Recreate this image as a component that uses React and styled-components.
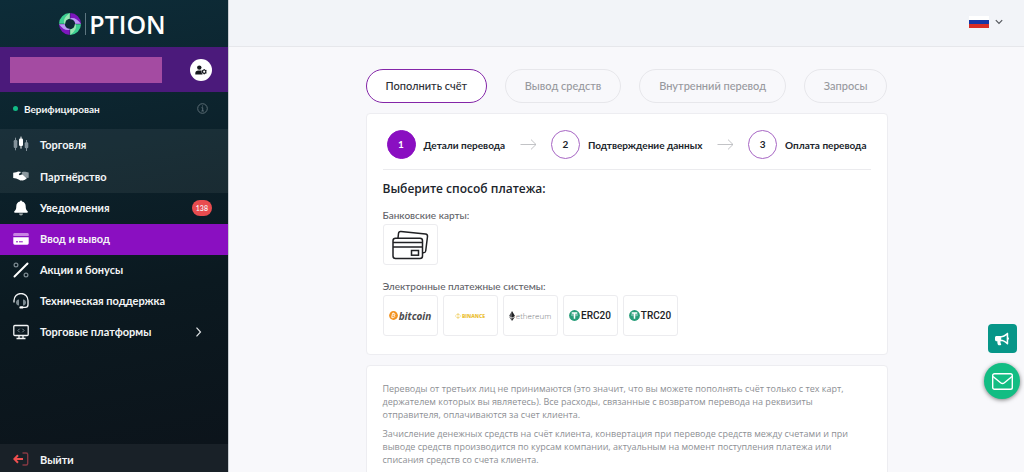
import React, { useState } from 'react';

import styled, { createGlobalStyle } from 'styled-components';
import { FaBullhorn } from 'react-icons/fa';

const GlobalStyle = createGlobalStyle`
  * {
    box-sizing: border-box;
  }
  body {
    margin: 0;
    background-color: #f8f8fb;
    color: #20242b;
    font-family: Lato, 'Open Sans', sans-serif;
    font-size: 11px;
  }
  button {
    padding: 0;
    border: 0;
    background: none;
    color: inherit;
    font: inherit;
    cursor: pointer;
  }
  a {
    color: inherit;
    text-decoration: none;
  }
  svg {
    display: block;
    flex-shrink: 0;
  }
`;

const Layout = styled.div`
  display: flex;
  height: 100vh;
`;

const Sidebar = styled.aside`
  width: 229px;
  flex-shrink: 0;
  display: flex;
  flex-direction: column;
  border-right: 1px solid #c9ced3;
  background: linear-gradient(170deg, #0d2c38 0%, #0b1920 62%, #0c131a 100%);
  color: #f3f5f6;
`;

const Logo = styled.a`
  height: 47px;
  padding-right: 3px;
  display: flex;
  align-items: center;
  justify-content: center;
  gap: 4px;
  color: #fff;
`;

const LogoText = styled.span`
  padding-left: 3px;
  border-left: 1px solid #5d7680;
  font-family: 'Open Sans', sans-serif;
  font-size: 25px;
  font-weight: 600;
  line-height: 22px;
`;

const UserBar = styled.div`
  height: 45px;
  padding: 0 16px 0 10px;
  display: flex;
  align-items: center;
  justify-content: space-between;
  background-color: #4b1a7b;
`;

const UserName = styled.div`
  width: 152px;
  height: 26px;
  background-color: #a44ba2;
`;

const ProfileButton = styled.button`
  width: 22px;
  height: 22px;
  display: flex;
  align-items: center;
  justify-content: center;
  border-radius: 50%;
  background-color: #fff;
`;

const Status = styled.div`
  height: 37px;
  padding: 0 20px 4px 13px;
  display: flex;
  align-items: center;
  gap: 6px;
  font-size: 10px;
  font-weight: 700;
`;

const StatusDot = styled.span`
  width: 5px;
  height: 5px;
  border-radius: 50%;
  background-color: #12bb86;
`;

const InfoButton = styled.button`
  margin-left: auto;
`;

const Menu = styled.nav`
  flex: 1;
`;

const MenuGroup = styled.div`
  background-color: rgba(255, 255, 255, 0.06);
`;

const MenuItem = styled.a`
  height: ${(props) => (props.$tall ? '32px' : '31px')};
  padding: 0 16px 2px 13px;
  display: flex;
  align-items: center;
  gap: 11px;
  background-color: ${(props) => (props.$active ? '#8a0fc1' : 'transparent')};
  font-weight: 700;
`;

const Badge = styled.span`
  height: 16px;
  padding: 0 4px;
  margin-left: auto;
  border-radius: 8px;
  background-color: #e84c4f;
  font-size: 7px;
  font-weight: 600;
  line-height: 16px;
`;

const MenuArrow = styled.span`
  margin: 0 10px 0 auto;
`;

const Logout = styled.button`
  height: 28px;
  padding: 2px 13px 0;
  display: flex;
  align-items: center;
  gap: 11px;
  background-color: #192128;
  font-weight: 700;
`;

const Main = styled.main`
  flex: 1;
  min-width: 0;
  overflow-y: auto;
  scrollbar-width: none;
`;

const Header = styled.header`
  height: 47px;
  padding: 0 21px 2px;
  display: flex;
  align-items: center;
  justify-content: flex-end;
  border-bottom: 1px solid #e6e7eb;
  background-color: #f2f4f8;
`;

const LanguageButton = styled.button`
  display: flex;
  align-items: center;
  gap: 6px;
`;

const Content = styled.div`
  max-width: 554px;
  margin: 0 auto;
  padding: 22px 16px 16px;
`;

const Tabs = styled.div`
  display: flex;
  justify-content: space-between;
  margin-bottom: 10px;
`;

const Tab = styled.button`
  height: 34px;
  padding: 0 19px 2px;
  border: 1px solid ${(props) => (props.$active ? '#8426a8' : '#e7e7eb')};
  border-radius: 17px;
  background-color: ${(props) => (props.$active ? '#fff' : 'transparent')};
  color: ${(props) => (props.$active ? '#2b2e35' : '#97999e')};
  font-weight: 500;
`;

const Card = styled.section`
  padding: 16px 16px 18px;
  margin-bottom: 10px;
  border: 1px solid #ededf1;
  border-radius: 4px;
  background-color: #fff;
`;

const Steps = styled.div`
  padding: 0 4px 10px;
  display: flex;
  align-items: center;
  justify-content: space-between;
  border-bottom: 1px solid #ebebee;
`;

const Step = styled.div`
  display: flex;
  align-items: center;
  gap: 8px;
  font-size: 10px;
  font-weight: 700;
`;

const StepNumber = styled.span`
  width: 29px;
  height: 29px;
  border: 1px solid ${(props) => (props.$active ? '#8a0fc1' : '#a766c4')};
  border-radius: 50%;
  background-color: ${(props) => (props.$active ? '#8a0fc1' : '#fff')};
  color: ${(props) => (props.$active ? '#fff' : '#20242b')};
  line-height: 27px;
  text-align: center;
`;

const CardTitle = styled.h2`
  margin: 10px 0 12px;
  font-family: 'Open Sans', sans-serif;
  font-size: 12px;
  font-weight: 600;
  line-height: 18px;
`;

const MethodLabel = styled.div`
  margin-bottom: 3px;
  color: #5f6268;
  font-size: 10px;
  font-weight: 500;
  line-height: 11px;
`;

const MethodList = styled.div`
  display: flex;
  flex-wrap: wrap;
  gap: 5px;
  & + ${MethodLabel} {
    margin-top: 16px;
  }
`;

const Method = styled.button`
  width: 55px;
  height: 41px;
  display: flex;
  align-items: center;
  justify-content: center;
  gap: 1px;
  border: 1px solid #ececef;
  border-radius: 3px;
  background-color: #fff;
`;

const Brand = styled.span`
  color: ${(props) => props.$color};
  font-family: ${(props) => props.$family || "'Open Sans', sans-serif"};
  font-size: ${(props) => props.$size};
  font-style: ${(props) => (props.$italic ? 'italic' : 'normal')};
  font-weight: ${(props) => props.$weight || 400};
`;

const Note = styled.p`
  margin: 0 0 6px;
  color: #8d8f94;
  font-family: 'Open Sans', sans-serif;
  font-size: 9px;
  line-height: 13px;
`;

const Floating = styled.div`
  position: fixed;
  right: 4px;
  bottom: 73px;
  display: flex;
  flex-direction: column;
  align-items: center;
  gap: 10px;
`;

const FloatingButton = styled.button`
  width: ${(props) => props.$size};
  height: ${(props) => props.$size};
  display: flex;
  align-items: center;
  justify-content: center;
  border-radius: ${(props) => props.$radius};
  background-color: ${(props) => props.$color};
  box-shadow: ${(props) => (props.$shadow ? '0 1px 4px rgba(0, 0, 0, 0.5)' : 'none')};
  color: #fff;
`;

const LogoIcon = () => (
  <svg width="22" height="22" viewBox="0 0 22 22">
    {logoSegments.map(({ angle, outer, inner }) => (
      <g key={angle} transform={`rotate(${angle} 11 11)`}>
        <path d="M11.300 0A11 11 0 0 1 22 10.700h-5.800a5.200 5.200 0 0 0-4.900-4.900z" fill={outer} />
        <path d="M11.300 5.200c3.500-1 7 .5 10.700 5.500h-5.800a5.200 5.200 0 0 0-4.900-4.500z" fill={inner} />
      </g>
    ))}
  </svg>
);

const ProfileIcon = () => (
  <svg width="12" height="10" viewBox="0 0 12 10">
    <circle cx="4.300" cy="2.600" r="2.200" fill="#15181d" />
    <path d="M.3 9.500V8.200c0-1.700 1.300-2.600 3-2.600h2.400c.5 0 .8.1 1 .2-.3 1.500 0 2.800 1 3.700z" fill="#15181d" />
    <circle cx="9.200" cy="6.700" r="1.700" fill="none" stroke="#15181d" strokeWidth="1.200" />
    <path d="M9.200 4v1M9.200 8.400v1M6.900 5.400l.8.400M10.700 7.600l.8.400M11.500 5.400l-.8.400M7.700 7.600l-.8.400" stroke="#15181d" strokeWidth="1" />
  </svg>
);

const InfoIcon = () => (
  <svg width="11" height="11" viewBox="0 0 11 11" fill="none" stroke="#62737b" strokeWidth=".9">
    <circle cx="5.500" cy="5.500" r="4.800" />
    <path d="M4.500 4.700h1.200V8M4.400 8h2.500M5.500 2.500v1" />
  </svg>
);

const TradeIcon = () => (
  <svg width="16" height="16" viewBox="0 0 16 16">
    <path d="M2.500 1.700v12.600M13.500 4v11" stroke="#82919a" />
    <rect x=".7" y="4" width="3.600" height="8" rx="1.200" fill="#82919a" />
    <rect x="11.700" y="6.300" width="3.600" height="6" rx="1.200" fill="#82919a" />
    <path d="M8 .6v12" stroke="#fff" />
    <rect x="6" y="2.500" width="4" height="7.500" rx="1.200" fill="#fff" />
  </svg>
);

const HandshakeIcon = () => (
  <svg width="16" height="12" viewBox="0 0 16 12">
    <path d="M8.500 2.600l1.600-.9h2.300l3.300.8v5.300l-2 .3-3.700-3z" fill="#8d999f" />
    <path d="M.2 2.700l3-.4 2-.9 3 .5-2.100 1.800c-.6.700.2 1.800 1.500 1.300l1.700-.8 4.100 3.700c.4.900-.3 1.500-1 1.300-.2.700-1 1-1.600.7-.5.700-1.200.8-1.900.4-1.200.4-2 .2-2.800-.5L3.200 8.400l-3-.3z" fill="#fff" />
  </svg>
);

const BellIcon = () => (
  <svg width="16" height="16" viewBox="0 0 16 16" fill="#fff">
    <path d="M7 1.500a1 1 0 0 1 2 0c2.400.5 3.700 2.300 3.700 4.700 0 2.500.5 3.600 1.900 5 .6.700.2 1.500-.6 1.500H2c-.8 0-1.200-.8-.6-1.500 1.400-1.400 1.900-2.500 1.900-5C3.300 3.800 4.600 2 7 1.500z" />
    <path d="M6 13.600h4a2 2 0 0 1-4 0z" opacity=".6" />
  </svg>
);

const CardIcon = () => (
  <svg width="16" height="14" viewBox="0 0 16 14">
    <path d="M1.500 1h13q1.200 0 1.200 1.200V4H.3V2.200Q.3 1 1.500 1z" fill="#c884e2" />
    <path d="M.3 5.300h15.400v6q0 1.400-1.400 1.400H1.700q-1.400 0-1.400-1.400z" fill="#fff" />
    <path d="M3 9.800h2M6 9.800h3.800" stroke="#8a0fc1" />
  </svg>
);

const PercentIcon = () => (
  <svg width="16" height="16" viewBox="0 0 16 16" fill="none">
    <path d="M14.500 1.500l-13 13" stroke="#fff" strokeWidth="2" strokeLinecap="round" />
    <circle cx="3" cy="3" r="1.900" stroke="#7c8a91" strokeWidth="1.200" />
    <circle cx="13" cy="13" r="1.900" stroke="#7c8a91" strokeWidth="1.200" />
  </svg>
);

const SupportIcon = () => (
  <svg width="16" height="16" viewBox="0 0 16 16" fill="none">
    <path d="M1 9.500V7.500a7 7 0 0 1 14 0v4.200c0 1.800-1 2.600-2.700 2.600H8.500" stroke="#f3f5f6" strokeWidth="1.300" />
    <path d="M6 6.500v6C3.800 12.500 3 11 3 9.500s.8-3 3-3zM10 6.500v6c2.200 0 3-1.500 3-3s-.8-3-3-3z" fill="#7c8a91" />
    <rect x="6.400" y="13.200" width="4" height="2.400" rx="1.200" fill="#fff" />
  </svg>
);

const PlatformIcon = () => (
  <svg width="16" height="16" viewBox="0 0 16 16" fill="none" stroke="#f3f5f6" strokeWidth="1.300">
    <rect x=".8" y="1.500" width="14.400" height="10" rx="1" />
    <path d="M6 11.500v2.700M10 11.500v2.700M3.500 14.500h9" />
    <path d="M6.700 4.700L4.900 6.500l1.800 1.800M9.300 4.700l1.800 1.800-1.800 1.800" stroke="#8b989e" strokeWidth="1" />
  </svg>
);

const LogoutIcon = () => (
  <svg width="16" height="14" viewBox="0 0 16 14" fill="none">
    <path d="M9.500 1h3.700q1.500 0 1.500 1.500v9q0 1.500-1.500 1.500H9.500" stroke="#843842" strokeWidth="1.400" />
    <path d="M10 7H1.500M5 3.300L1.300 7 5 10.700" stroke="#ef4f4f" strokeWidth="2" />
  </svg>
);

const StepArrow = () => (
  <svg width="17" height="11" viewBox="0 0 17 11" fill="none" stroke="#bbbcc0" strokeWidth=".9">
    <path d="M.5 5.500h15.500M11 .6l5 4.900-5 4.900" />
  </svg>
);

const BankCardsIcon = () => (
  <svg width="37" height="30" viewBox="0 0 37 30" fill="none" stroke="#202124" strokeWidth="1.500">
    <path d="M6 8l.5-4.500Q6.700 1.300 9 1.500L33.500 4q2.200.3 2 2.500L33.700 21q-.3 2-2.700 1.800" />
    <rect x="1" y="8.200" width="29.500" height="20.300" rx="2.500" />
    <path d="M1 12.500h29.500M1 17h29.500" />
    <rect x="19.500" y="20.500" width="7" height="4.700" />
  </svg>
);

const BitcoinIcon = () => (
  <svg width="9" height="9" viewBox="0 0 9 9" fill="none">
    <circle cx="4.500" cy="4.500" r="4.400" fill="#f39320" />
    <path d="M3.500 2.300l-.8 4M3.500 2.500h1.600c1.400 0 1.200 1.700-.1 1.700H3.200M4.800 4.300c1.700 0 1.300 2-.2 2H2.500M4.300 1.500l-.2 1M4 6.300l-.2 1" stroke="#fff" strokeWidth=".8" />
  </svg>
);

const BinanceIcon = () => (
  <svg width="6" height="6" viewBox="0 0 12 12" fill="none" stroke="#ecc23b" strokeWidth="1.900">
    <path d="M3 4.300l3-3 3 3M3 7.700l3 3 3-3" />
    <path d="M6 4.600L7.400 6 6 7.400 4.600 6zM.2 6l1.200-1.200L2.600 6 1.400 7.200zM9.400 6l1.200-1.200L11.800 6l-1.200 1.200z" fill="#ecc23b" stroke="none" />
  </svg>
);

const EthereumIcon = () => (
  <svg width="6" height="10" viewBox="0 0 6 10">
    <path d="M3 0L0 5l3 1.800z" fill="#55565a" />
    <path d="M3 0l3 5-3 1.800z" fill="#202124" />
    <path d="M0 5.700L3 10V7.500z" fill="#55565a" />
    <path d="M6 5.700L3 10V7.500z" fill="#202124" />
  </svg>
);

const TetherIcon = () => (
  <svg width="11" height="11" viewBox="0 0 11 11" fill="none">
    <circle cx="5.500" cy="5.500" r="5.400" fill="#279d79" />
    <path d="M2.700 3h5.600M5.500 3v5.700" stroke="#fff" strokeWidth="1.500" />
    <ellipse cx="5.500" cy="5" rx="3.300" ry=".8" stroke="#fff" strokeWidth=".4" />
  </svg>
);

const FlagIcon = () => (
  <svg width="20" height="12" viewBox="0 0 20 12">
    <rect width="20" height="4" fill="#fff" />
    <rect y="4" width="20" height="4" fill="#1737a5" />
    <rect y="8" width="20" height="4" fill="#d92d24" />
  </svg>
);

const Chevron = () => (
  <svg width="8" height="6" viewBox="0 0 8 6" fill="none" stroke="#55585e" strokeWidth="1.200">
    <path d="M.8 1.200L4 4.400l3.200-3.200" />
  </svg>
);

const MailIcon = () => (
  <svg width="21" height="17" viewBox="0 0 21 17" fill="none" stroke="#fff" strokeWidth="1.400">
    <rect x=".7" y=".7" width="19.600" height="15.600" rx="1.800" />
    <path d="M1 3.500l7.600 6.200q1.900 1.500 3.800 0L20 3.500" />
  </svg>
);

const LeftMenu = () => {
  return (
    <Sidebar>
      <Logo href="#" aria-label="Option">
        <LogoIcon />
        <LogoText>PTION</LogoText>
      </Logo>
      <UserBar>
        <UserName />
        <ProfileButton aria-label="Профиль">
          <ProfileIcon />
        </ProfileButton>
      </UserBar>
      <Status>
        <StatusDot />
        Верифицирован
        <InfoButton aria-label="Информация">
          <InfoIcon />
        </InfoButton>
      </Status>
      <Menu>
        <MenuGroup>
          {tradeMenuList.map(({ label, Icon }) => (
            <MenuItem key={label} href="#" $tall>
              <Icon />
              {label}
            </MenuItem>
          ))}
        </MenuGroup>
        {menuList.map(({ label, Icon, active, badge, arrow }) => (
          <MenuItem key={label} href="#" $active={active}>
            <Icon />
            {label}
            {badge && <Badge>{badge}</Badge>}
            {arrow && (
              <MenuArrow>
                <svg width="7" height="10" viewBox="0 0 7 10" fill="none" stroke="#dfe3e5" strokeWidth="1.200">
                  <path d="M1.500.7L5.500 5l-4 4.300" />
                </svg>
              </MenuArrow>
            )}
          </MenuItem>
        ))}
      </Menu>
      <Logout>
        <LogoutIcon />
        Выйти
      </Logout>
    </Sidebar>
  );
};

const TransferSteps = () => (
  <Steps>
    {stepList.map((label, index) => (
      <React.Fragment key={label}>
        {index > 0 && <StepArrow />}
        <Step>
          <StepNumber $active={index === 0}>{index + 1}</StepNumber>
          {label}
        </Step>
      </React.Fragment>
    ))}
  </Steps>
);

const PaymentMethods = () => (
  <>
    <CardTitle>Выберите способ платежа:</CardTitle>
    <MethodLabel>Банковские карты:</MethodLabel>
    <MethodList>
      <Method aria-label="Банковская карта">
        <BankCardsIcon />
      </Method>
    </MethodList>
    <MethodLabel>Электронные платежные системы:</MethodLabel>
    <MethodList>
      <Method>
        <BitcoinIcon />
        <Brand $color="#4b4b4d" $size="10px" $weight={700} $italic>
          bitcoin
        </Brand>
      </Method>
      <Method>
        <BinanceIcon />
        <Brand $color="#ecc23b" $size="5px" $weight={800}>
          BINANCE
        </Brand>
      </Method>
      <Method>
        <EthereumIcon />
        <Brand $color="#77787c" $size="8px" $weight={300}>
          ethereum
        </Brand>
      </Method>
      {['ERC20', 'TRC20'].map((name) => (
        <Method key={name}>
          <TetherIcon />
          <Brand $color="#202124" $size="10px" $weight={500} $family="Roboto, sans-serif">
            {name}
          </Brand>
        </Method>
      ))}
    </MethodList>
  </>
);

const App = () => {
  const [tab, setTab] = useState('Пополнить счёт');

  return (
    <Layout>
      <GlobalStyle />
      <LeftMenu />
      <Main>
        <Header>
          <LanguageButton aria-label="Русский">
            <FlagIcon />
            <Chevron />
          </LanguageButton>
        </Header>
        <Content>
          <Tabs>
            {tabList.map((label) => (
              <Tab key={label} $active={label === tab} onClick={() => setTab(label)}>
                {label}
              </Tab>
            ))}
          </Tabs>
          <Card>
            <TransferSteps />
            <PaymentMethods />
          </Card>
          <Card>
            {noteList.map((note) => (
              <Note key={note}>{note}</Note>
            ))}
          </Card>
        </Content>
      </Main>
      <Floating>
        <FloatingButton $size="29px" $radius="4px" $color="#079688" aria-label="Новости">
          <FaBullhorn size={14} />
        </FloatingButton>
        <FloatingButton $size="36px" $radius="50%" $color="#12bd83" $shadow aria-label="Написать нам">
          <MailIcon />
        </FloatingButton>
      </Floating>
    </Layout>
  );
};

export default App;

const logoSegments = [
  { angle: 0, outer: '#7d16bd', inner: '#b89af2' },
  { angle: 90, outer: '#3ccf91', inner: '#98e5b2' },
  { angle: 180, outer: '#7d16bd', inner: '#b89af2' },
  { angle: 270, outer: '#3ccf91', inner: '#98e5b2' },
];

const tradeMenuList = [
  { label: 'Торговля', Icon: TradeIcon },
  { label: 'Партнёрство', Icon: HandshakeIcon },
];

const menuList = [
  { label: 'Уведомления', Icon: BellIcon, badge: '138' },
  { label: 'Ввод и вывод', Icon: CardIcon, active: true },
  { label: 'Акции и бонусы', Icon: PercentIcon },
  { label: 'Техническая поддержка', Icon: SupportIcon },
  { label: 'Торговые платформы', Icon: PlatformIcon, arrow: true },
];

const tabList = ['Пополнить счёт', 'Вывод средств', 'Внутренний перевод', 'Запросы'];

const stepList = ['Детали перевода', 'Подтверждение данных', 'Оплата перевода'];

const noteList = [
  'Переводы от третьих лиц не принимаются (это значит, что вы можете пополнять счёт только с тех карт, держателем которых вы являетесь). Все расходы, связанные с возвратом перевода на реквизиты отправителя, оплачиваются за счет клиента.',
  'Зачисление денежных средств на счёт клиента, конвертация при переводе средств между счетами и при выводе средств производится по курсам компании, актуальным на момент поступления платежа или списания средств со счета клиента.',
];
